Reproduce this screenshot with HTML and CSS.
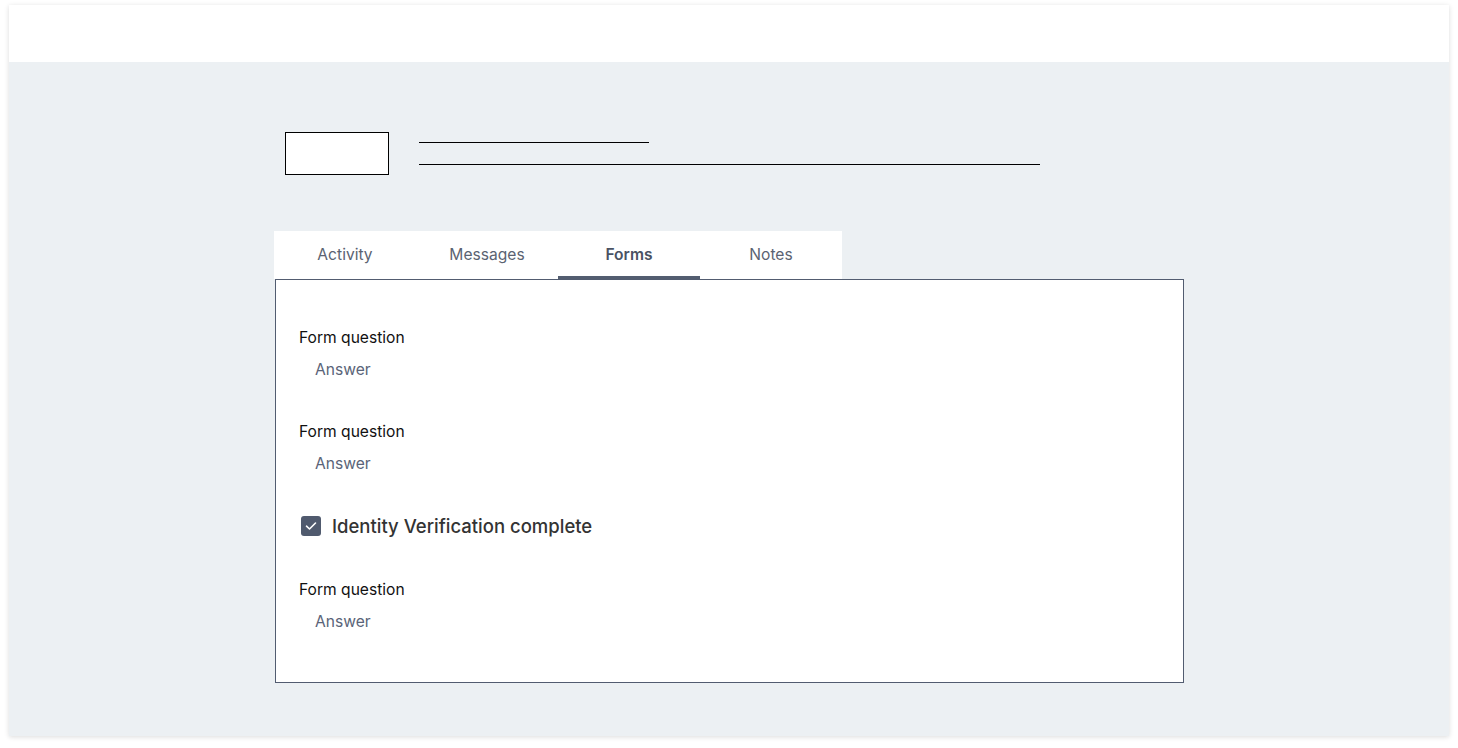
FILE: index.html
```html
<!DOCTYPE html>
<html lang="en">
<head>
    <meta charset="UTF-8">
    <meta name="viewport" content="width=device-width, initial-scale=1.0">
    <title>Applicant forms</title>
    <link rel="stylesheet" href="styles.css">
</head>
<body>
    <div class="frame">
        <header class="topbar"></header>

        <main class="main">
            <!-- Applicant summary placeholder -->
            <div class="summary">
                <div class="avatar-box"></div>
                <div class="summary-lines">
                    <div class="line line-short"></div>
                    <div class="line line-long"></div>
                </div>
            </div>

            <nav class="tabs">
                <div class="tab">Activity</div>
                <div class="tab">Messages</div>
                <div class="tab active">Forms</div>
                <div class="tab">Notes</div>
            </nav>

            <section class="panel">
                <div class="field">
                    <div class="question">Form question</div>
                    <div class="answer">Answer</div>
                </div>
                <div class="field">
                    <div class="question">Form question</div>
                    <div class="answer">Answer</div>
                </div>
                <label class="check-row">
                    <span class="checkbox">
                        <svg width="12" height="10" viewBox="0 0 12 10" fill="none">
                            <path d="M1.5 5.2 L4.5 8 L10.5 2" stroke="#fff" stroke-width="1.6" stroke-linecap="round" stroke-linejoin="round"/>
                        </svg>
                    </span>
                    Identity Verification complete
                </label>
                <div class="field">
                    <div class="question">Form question</div>
                    <div class="answer">Answer</div>
                </div>
            </section>
        </main>
    </div>
</body>
</html>
```

FILE: styles.css
```css
body {
    margin: 0;
    padding: 5px 9px 12px 9px;
    background-color: #fff;
    font-family: "Inter", "Noto Sans", sans-serif;
}
.frame {
    height: 731px;
    background-color: #ecf0f3;
    box-shadow: 0 1px 5px rgba(0, 0, 0, 0.14);
}
.topbar {
    height: 57px;
    background-color: #fff;
}
.main {
    padding: 70px 0 0 265px;
}

/* placeholder summary */
.summary {
    display: flex;
    margin-left: 11px;
}
.avatar-box {
    width: 102px;
    height: 41px;
    border: 1px solid #000;
    background-color: #fff;
}
.summary-lines {
    margin-left: 30px;
    padding-top: 10px;
}
.line {
    height: 1px;
    background-color: #000;
}
.line-short {
    width: 230px;
}
.line-long {
    width: 621px;
    margin-top: 21px;
}

/* tabs */
.tabs {
    display: flex;
    width: 568px;
    height: 48px;
    margin-top: 56px;
    background-color: #fff;
}
.tab {
    width: 142px;
    display: flex;
    align-items: center;
    justify-content: center;
    font-size: 15.6px;
    color: #5b6372;
    box-sizing: border-box;
    padding-bottom: 1px;
}
.tab.active {
    font-weight: 600;
    color: #4a5263;
    border-bottom: 3px solid #535d70;
    padding-top: 2px;
    padding-bottom: 0;
}

/* forms panel */
.panel {
    width: 909px;
    height: 404px;
    box-sizing: border-box;
    margin-left: 1px;
    padding: 48px 23px 0 23px;
    background-color: #fff;
    border: 1px solid #525c70;
}
.field {
    margin-bottom: 42px;
}
.question {
    font-size: 15.6px;
    line-height: 20px;
    color: #111;
}
.answer {
    margin-top: 12px;
    padding-left: 16px;
    font-size: 15.6px;
    line-height: 20px;
    color: #5a6478;
}
.check-row {
    display: flex;
    align-items: center;
    height: 24px;
    margin-top: -2px;
    margin-bottom: 42px;
    padding-left: 2px;
    font-size: 18.5px;
    font-weight: 500;
    color: #333;
}
.checkbox {
    width: 20px;
    height: 20px;
    margin-right: 11px;
    border-radius: 3px;
    background-color: #505a6e;
    display: flex;
    align-items: center;
    justify-content: center;
}
```
